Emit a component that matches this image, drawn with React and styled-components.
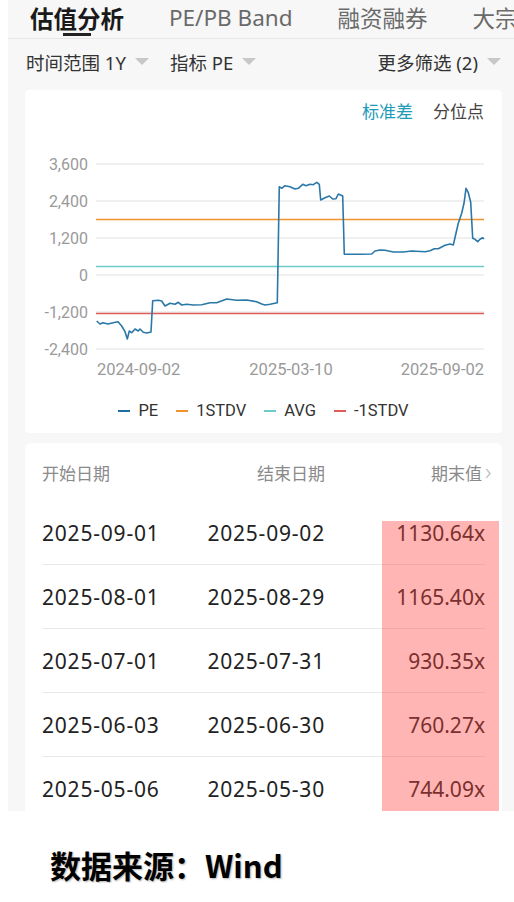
import React from "react";
import styled, { createGlobalStyle } from "styled-components";

const GlobalStyle = createGlobalStyle`
  body {
    margin: 0;
    background: #ffffff;
    font-family: "Noto Sans", "Noto Sans CJK SC", sans-serif;
  }
`;

const tabs = ["估值分析", "PE/PB Band", "融资融券", "大宗交易"];

const rows = [
  { start: "2025-09-01", end: "2025-09-02", value: "1130.64x" },
  { start: "2025-08-01", end: "2025-08-29", value: "1165.40x" },
  { start: "2025-07-01", end: "2025-07-31", value: "930.35x" },
  { start: "2025-06-03", end: "2025-06-30", value: "760.27x" },
  { start: "2025-05-06", end: "2025-05-30", value: "744.09x" },
];

// chart drawn in page coordinates (viewBox starts at the card's corner)
const yTicks = [
  { label: "3,600", y: 164 },
  { label: "2,400", y: 201 },
  { label: "1,200", y: 238 },
  { label: "0", y: 275 },
  { label: "-1,200", y: 312 },
  { label: "-2,400", y: 349 },
];

const pePoints = [
  [96.7, 321], [100, 324], [103, 322.7], [108, 324], [113, 322.7], [118, 321.7],
  [121.7, 326], [125, 331.7], [127.3, 339], [129.3, 331], [131.7, 332.7], [135, 329],
  [138.3, 331], [140, 329], [143.3, 332.3], [146.7, 333], [151, 332], [152.7, 300.7],
  [158.3, 300.3], [161.7, 301], [165, 306], [170, 303.3], [175, 304.3], [178.3, 302.3],
  [181.7, 305], [186.7, 304.3], [193.3, 305], [201.7, 304.7], [210, 302.7], [216.7, 302.7],
  [226.7, 299], [236.7, 300.3], [246.7, 300], [256.7, 301.7], [261.7, 304], [265, 305],
  [270, 304.3], [277.3, 302.7], [279.3, 186.7], [281.7, 188.3], [285, 185.7], [290, 186.7],
  [295, 189], [298.3, 188.3], [302.7, 184.3], [306, 185.7], [310, 184.3], [313.3, 184.7],
  [316.7, 182.3], [319.3, 184.3], [320.7, 200], [325, 197.7], [329.3, 196], [332.7, 199],
  [336, 198.7], [338.3, 194], [342.7, 196], [344.3, 254.3], [360, 254.3], [371.7, 254],
  [375, 251], [380, 250], [385, 250.3], [393.3, 252], [403.3, 252], [411.7, 251],
  [425, 251.7], [430, 250.7], [434.3, 248.7], [438.3, 248.7], [445, 245.3], [450, 244],
  [453.3, 245], [456, 233.3], [458.3, 223.3], [461.7, 213.3], [464, 203.3], [466, 188.3],
  [468.3, 192.7], [470.7, 202.3], [472.7, 238.3], [475, 239.3], [477.7, 241.7], [480, 239.3],
  [482.7, 237.7], [484, 239],
];

const bands = [
  { key: "1STDV", color: "#f0922e", y: 219.5 },
  { key: "AVG", color: "#6ccccc", y: 266.5 },
  { key: "-1STDV", color: "#e05c5c", y: 313.5 },
];

const legend = [
  { key: "PE", color: "#1f6fa5" },
  { key: "1STDV", color: "#f0922e" },
  { key: "AVG", color: "#6ccccc" },
  { key: "-1STDV", color: "#e05c5c" },
];

function BandChart() {
  return (
    <ChartSvg viewBox="25 122 477 258" width="477" height="258">
      {yTicks.map((t) => (
        <g key={t.label}>
          <line x1="96" x2="484" y1={t.y} y2={t.y} stroke="#e2e2e2" strokeWidth="1.2" />
          <text x="88" y={t.y + 5.5} textAnchor="end" fontSize="16" fill="#9a9a9a">
            {t.label}
          </text>
        </g>
      ))}
      {bands.map((b) => (
        <line key={b.key} x1="96" x2="484" y1={b.y} y2={b.y} stroke={b.color} strokeWidth="1.6" />
      ))}
      <polyline
        points={pePoints.map((p) => p.join(",")).join(" ")}
        fill="none"
        stroke="#2a78a8"
        strokeWidth="1.6"
        strokeLinejoin="round"
      />
      <text x="97" y="375" fontSize="16.5" fill="#9a9a9a">2024-09-02</text>
      <text x="291" y="375" fontSize="16.5" fill="#9a9a9a" textAnchor="middle">2025-03-10</text>
      <text x="484" y="375" fontSize="16.5" fill="#9a9a9a" textAnchor="end">2025-09-02</text>
    </ChartSvg>
  );
}

export default function App() {
  return (
    <>
      <GlobalStyle />
      <Screen>
        <TabBar>
          {tabs.map((t, i) => (
            <Tab key={t} active={i === 0}>{t}</Tab>
          ))}
        </TabBar>

        <FilterRow>
          <Filter>时间范围 1Y<Caret /></Filter>
          <Filter>指标 PE<Caret /></Filter>
          <Spacer />
          <Filter>更多筛选 (2)<Caret /></Filter>
        </FilterRow>

        <ChartCard>
          <ModeRow>
            <Mode active>标准差</Mode>
            <Mode>分位点</Mode>
          </ModeRow>
          <BandChart />
          <Legend>
            {legend.map((l) => (
              <LegendItem key={l.key}>
                <LegendLine color={l.color} />
                {l.key}
              </LegendItem>
            ))}
          </Legend>
        </ChartCard>

        <TableCard>
          <HeaderRow>
            <HeadCell>开始日期</HeadCell>
            <HeadCell align="right">结束日期</HeadCell>
            <HeadCell align="right">
              期末值<Chevron>›</Chevron>
            </HeadCell>
          </HeaderRow>
          {rows.map((r) => (
            <Row key={r.start}>
              <Cell>{r.start}</Cell>
              <Cell align="right">{r.end}</Cell>
              <Cell align="right" tight>{r.value}</Cell>
            </Row>
          ))}
        </TableCard>

        <Highlight />
      </Screen>

      <Caption>数据来源：Wind</Caption>
    </>
  );
}

const Screen = styled.div`
  position: relative;
  margin-left: 8px;
  height: 811px;
  background: #f7f7f7;
  overflow: hidden;
`;

const TabBar = styled.div`
  display: flex;
  align-items: stretch;
  height: 38px;
  padding-left: 22px;
  gap: 45px;
  border-bottom: 1px solid #e6e6e6;
  white-space: nowrap;
`;

const Tab = styled.div`
  position: relative;
  display: flex;
  align-items: center;
  padding-bottom: 3px;
  font-size: ${(p) => (p.active ? "23.5px" : "22.5px")};
  font-weight: ${(p) => (p.active ? 700 : 400)};
  color: ${(p) => (p.active ? "#1a1a1a" : "#6a6a6a")};
  &::after {
    content: "";
    display: ${(p) => (p.active ? "block" : "none")};
    position: absolute;
    left: 50%;
    bottom: 2px;
    width: 28px;
    height: 3px;
    margin-left: -14px;
    background: #222;
  }
`;

const FilterRow = styled.div`
  display: flex;
  align-items: center;
  height: 45px;
  padding: 0 13px 0 18px;
  gap: 21px;
`;

const Filter = styled.div`
  display: flex;
  align-items: center;
  font-size: 18.5px;
  color: #333;
`;

const Caret = styled.span`
  margin-left: 9px;
  width: 0;
  height: 0;
  border-left: 7px solid transparent;
  border-right: 7px solid transparent;
  border-top: 7px solid #c8c8c8;
`;

const Spacer = styled.div`
  flex: 1;
`;

const ChartCard = styled.div`
  margin: 6px 12px 0 17px;
  padding: 12px 0 12px;
  background: #fff;
  border-radius: 4px;
`;

const ModeRow = styled.div`
  display: flex;
  justify-content: flex-end;
  gap: 20px;
  padding-right: 18px;
  line-height: 20px;
`;

const Mode = styled.span`
  font-size: 17px;
  color: ${(p) => (p.active ? "#1d9bb8" : "#444")};
`;

const ChartSvg = styled.svg`
  display: block;
  font-family: Roboto, sans-serif;
`;

const Legend = styled.div`
  display: flex;
  justify-content: center;
  gap: 18px;
  margin-top: 21px;
  height: 20px;
  line-height: 20px;
  font-family: Roboto, sans-serif;
  font-size: 16.5px;
  color: #333;
`;

const LegendItem = styled.div`
  display: flex;
  align-items: center;
  gap: 8px;
`;

const LegendLine = styled.span`
  width: 12px;
  height: 2.5px;
  background: ${(p) => p.color};
`;

const TableCard = styled.div`
  margin: 10px 12px 0 17px;
  background: #fff;
  border-radius: 6px;
  height: 400px;
`;

const HeaderRow = styled.div`
  display: grid;
  grid-template-columns: 140px 143px 1fr;
  align-items: center;
  height: 58px;
  padding: 0 17px;
`;

const HeadCell = styled.div`
  font-size: 17px;
  color: #8a8a8a;
  text-align: ${(p) => p.align || "left"};
  white-space: nowrap;
`;

const Chevron = styled.span`
  display: inline-block;
  width: 0;
  margin-left: 3px;
  color: #bbb;
  font-size: 24px;
  line-height: 17px;
  font-weight: 300;
`;

const Row = styled.div`
  display: grid;
  grid-template-columns: 140px 143px 1fr;
  align-items: center;
  height: 63px;
  margin: 0 17px;
  border-bottom: 1px solid #e9e9e9;
`;

const Cell = styled.div`
  font-size: 21px;
  letter-spacing: ${(p) => (p.tight ? "0" : "0.8px")};
  color: #222;
  text-align: ${(p) => p.align || "left"};
  white-space: nowrap;
`;

const Highlight = styled.div`
  position: absolute;
  left: 374px;
  top: 521px;
  width: 117px;
  bottom: 0;
  background: rgba(255, 70, 64, 0.4);
  pointer-events: none;
`;

const Caption = styled.div`
  margin-top: 36px;
  padding-left: 50px;
  font-family: "Noto Sans CJK SC", sans-serif;
  font-size: 31px;
  line-height: 36px;
  font-weight: 700;
  color: #000;
  text-shadow: 1px 1px 2px rgba(0, 0, 0, 0.3);
`;
